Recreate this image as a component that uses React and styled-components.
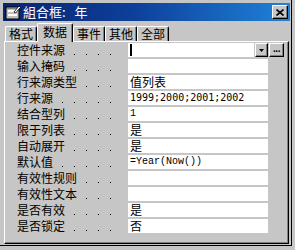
import React from 'react';
import styled, { createGlobalStyle } from 'styled-components';

const face = '#c6c6c6';

const GlobalStyle = createGlobalStyle`
  html, body {
    margin: 0;
    padding: 0;
    background: ${face};
  }
  body {
    font-family: "Noto Sans CJK SC", "Noto Sans", sans-serif;
    font-size: 12px;
  }
`;

const Window = styled.div`
  box-sizing: border-box;
  width: 295px;
  height: 250px;
  padding: 3px 5px 0 3px;
  background: ${face};
  display: flex;
  flex-direction: column;
  box-shadow:
    inset -3px -4px 0 ${face},
    inset -4px -5px 0 #000;
`;

const TitleBar = styled.div`
  height: 18px;
  display: flex;
  align-items: center;
  padding: 0 2px 0 2px;
  background: linear-gradient(to right, #0a2470 0%, #0d3f9a 45%, #1f82d8 100%);
  color: #fff;
`;

const TitleIcon = styled.svg`
  width: 16px;
  height: 16px;
  flex: none;
`;

const TitleText = styled.span`
  margin-left: 2px;
  font-size: 13px;
  font-weight: 400;
  word-spacing: 6px;
  line-height: 18px;
  white-space: nowrap;
  flex: 1;
`;

const CloseButton = styled.div`
  box-sizing: border-box;
  width: 16px;
  height: 14px;
  background: ${face};
  border-top: 1px solid #fff;
  border-left: 1px solid #fff;
  border-right: 1px solid #000;
  border-bottom: 1px solid #000;
  box-shadow: inset -1px -1px 0 #808080;
  display: flex;
  align-items: center;
  justify-content: center;
`;

const TabStrip = styled.div`
  margin-top: 2px;
  height: 18px;
  display: flex;
  align-items: flex-end;
  padding-left: 2px;
`;

const Tab = styled.div`
  box-sizing: border-box;
  position: relative;
  width: ${p => (p.$active ? 36 : 32)}px;
  height: ${p => (p.$active ? 19 : 15)}px;
  margin-bottom: ${p => (p.$active ? -1 : 0)}px;
  z-index: ${p => (p.$active ? 1 : 0)};
  background: ${face};
  border-top: 1px solid #fff;
  border-left: 1px solid #fff;
  border-right: 1px solid #000;
  border-radius: 2px 2px 0 0;
  box-shadow: inset -1px 0 0 #808080;
  display: flex;
  align-items: ${p => (p.$active ? 'flex-start' : 'center')};
  justify-content: center;
  padding-top: ${p => (p.$active ? 1 : 0)}px;
  color: #000;
  font-size: 12px;
  line-height: 14px;
`;

const Panel = styled.div`
  box-sizing: border-box;
  margin: 0 0 0 1px;
  width: 285px;
  height: 203px;
  border-top: 1px solid #fff;
  border-left: 1px solid #fff;
  border-right: 1px solid #000;
  border-bottom: 1px solid #000;
  box-shadow: inset -1px -1px 0 #808080;
  padding-top: 1px;
  display: flex;
  flex-direction: column;
  gap: 2px;
`;

const Row = styled.div`
  display: flex;
  height: 14px;
`;

const LabelCell = styled.div`
  width: 123px;
  flex: none;
  display: flex;
  padding: 0 6px 0 12px;
  box-sizing: border-box;
  color: #000;
  font-size: 12px;
  line-height: 14px;
`;

const LabelText = styled.span`
  white-space: nowrap;
  flex: none;
`;

/* dotted leader, anchored to the right edge so the dots sit on one grid */
const Leader = styled.span`
  flex: 1;
  margin-left: 3px;
  background-image: repeating-linear-gradient(
    to left,
    transparent 0 11px,
    #000 11px 12px
  );
  background-size: 100% 1px;
  background-position: 0 11px;
  background-repeat: no-repeat;
`;

const ValueCell = styled.div`
  box-sizing: border-box;
  width: ${p => p.$width || 140}px;
  height: 14px;
  flex: none;
  background: #fff;
  padding-left: 2px;
  color: #000;
  white-space: nowrap;
  font-family: ${p =>
    p.$font === 'serif'
      ? '"Liberation Mono", monospace'
      : p.$font === 'mono'
      ? '"DejaVu Sans Mono", monospace'
      : '"Noto Sans CJK SC", sans-serif'};
  font-size: ${p => (p.$font ? 10 : 12)}px;
  line-height: 14px;
`;

const Caret = styled.span`
  display: inline-block;
  width: 2px;
  height: 12px;
  margin-top: 1px;
  background: #000;
`;

const ComboWrap = styled.div`
  display: flex;
  gap: 1px;
`;

const SmallButton = styled.div`
  box-sizing: border-box;
  width: ${p => p.$w}px;
  height: 14px;
  background: ${face};
  border-top: 1px solid #fff;
  border-left: 1px solid #fff;
  border-right: 1px solid #000;
  border-bottom: 1px solid #000;
  box-shadow: inset -1px -1px 0 #808080;
  display: flex;
  align-items: center;
  justify-content: center;
`;

const DotsGlyph = styled.span`
  font-family: "Liberation Sans", sans-serif;
  font-weight: 700;
  font-size: 10px;
  line-height: 8px;
  letter-spacing: -0.5px;
  margin-top: -2px;
`;

const props = [
  { label: '控件来源', combo: true },
  { label: '输入掩码', value: '' },
  { label: '行来源类型', value: '值列表' },
  { label: '行来源', value: '1999;2000;2001;2002', font: 'mono' },
  { label: '结合型列', value: '1', font: 'serif' },
  { label: '限于列表', value: '是' },
  { label: '自动展开', value: '是' },
  { label: '默认值', value: '=Year(Now())', font: 'serif' },
  { label: '有效性规则', value: '' },
  { label: '有效性文本', value: '' },
  { label: '是否有效', value: '是' },
  { label: '是否锁定', value: '否' },
];

const tabs = ['格式', '数据', '事件', '其他', '全部'];

const App = () => {
  return (
    <>
      <GlobalStyle />
      <Window>
        <TitleBar>
          <TitleIcon viewBox="0 0 16 16">
            <rect x="1" y="3" width="13" height="12" fill="#c0c0c0" stroke="#000" strokeWidth="1" />
            <rect x="3" y="6" width="9" height="2" fill="#fff" />
            <rect x="3" y="10" width="9" height="2" fill="#fff" />
            <rect x="2" y="4" width="11" height="1" fill="#808080" />
            <path d="M9 8 L14 2 L15.5 3.5 L10.5 9 Z" fill="#fff" stroke="#000" strokeWidth="0.8" />
          </TitleIcon>
          <TitleText>組合框: 年</TitleText>
          <CloseButton>
            <svg width="8" height="7" viewBox="0 0 8 7">
              <path d="M0.5 0.5 L7.5 6.5 M7.5 0.5 L0.5 6.5" stroke="#000" strokeWidth="1.6" />
            </svg>
          </CloseButton>
        </TitleBar>
        <TabStrip>
          {tabs.map(t => (
            <Tab key={t} $active={t === '数据'}>{t}</Tab>
          ))}
        </TabStrip>
        <Panel>
          {props.map(p => (
            <Row key={p.label}>
              <LabelCell>
                <LabelText>{p.label}</LabelText>
                <Leader />
              </LabelCell>
              {p.combo ? (
                <ComboWrap>
                  <ValueCell $width={126}>
                    <Caret />
                  </ValueCell>
                  <SmallButton $w={13}>
                    <svg width="5" height="3" viewBox="0 0 5 3">
                      <path d="M0 0 H5 L2.5 3 Z" fill="#000" />
                    </svg>
                  </SmallButton>
                  <SmallButton $w={15}>
                    <DotsGlyph>...</DotsGlyph>
                  </SmallButton>
                </ComboWrap>
              ) : (
                <ValueCell $font={p.font}>{p.value}</ValueCell>
              )}
            </Row>
          ))}
        </Panel>
      </Window>
    </>
  );
};

export default App;
